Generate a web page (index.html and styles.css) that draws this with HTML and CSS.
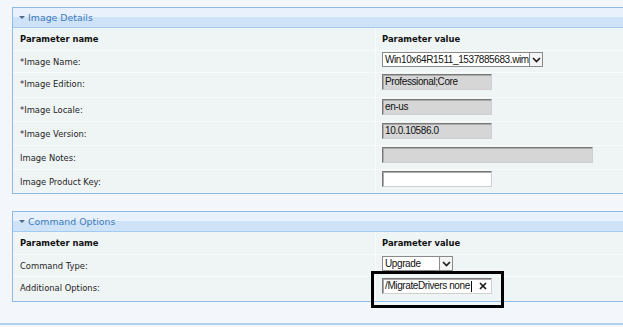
FILE: index.html
```html
<!DOCTYPE html>
<html>
<head>
<meta charset="utf-8">
<link rel="stylesheet" href="styles.css">
</head>
<body>
<div class="page">
  <section class="panel">
    <div class="panel-head"><span class="tri"></span><span class="title">Image Details</span></div>
    <div class="grid">
      <div class="row head">
        <div class="name">Parameter name</div>
        <div class="value">Parameter value</div>
      </div>
      <div class="row first">
        <div class="name">*Image Name:</div>
        <div class="value">
          <div class="select wide"><span class="sel-text">Win10x64R1511_1537885683.wim</span><span class="sel-btn"><svg width="9" height="6" viewBox="0 0 9 6"><path d="M1 1 L4.5 4.5 L8 1" fill="none" stroke="#1a1a1a" stroke-width="1.6"/></svg></span></div>
        </div>
      </div>
      <div class="row tall">
        <div class="name">*Image Edition:</div>
        <div class="value"><div class="input ro">Professional;Core</div></div>
      </div>
      <div class="row">
        <div class="name">*Image Locale:</div>
        <div class="value"><div class="input ro">en-us</div></div>
      </div>
      <div class="row">
        <div class="name">*Image Version:</div>
        <div class="value"><div class="input ro">10.0.10586.0</div></div>
      </div>
      <div class="row">
        <div class="name">Image Notes:</div>
        <div class="value"><div class="input ro notes"></div></div>
      </div>
      <div class="row">
        <div class="name">Image Product Key:</div>
        <div class="value"><div class="input"></div></div>
      </div>
    </div>
  </section>

  <section class="panel second">
    <div class="panel-head"><span class="tri"></span><span class="title">Command Options</span></div>
    <div class="grid">
      <div class="row head">
        <div class="name">Parameter name</div>
        <div class="value">Parameter value</div>
      </div>
      <div class="row short">
        <div class="name">Command Type:</div>
        <div class="value">
          <div class="select small"><span class="sel-text">Upgrade</span><span class="sel-btn"><svg width="9" height="6" viewBox="0 0 9 6"><path d="M1 1 L4.5 4.5 L8 1" fill="none" stroke="#1a1a1a" stroke-width="1.6"/></svg></span></div>
        </div>
      </div>
      <div class="row last">
        <div class="name">Additional Options:</div>
        <div class="value">
          <div class="input opts"><span class="opt-text">/MigrateDrivers none</span><span class="caret"></span><svg class="clear" width="8" height="8" viewBox="0 0 8 8"><path d="M1 1 L7 7 M7 1 L1 7" stroke="#1a1a1a" stroke-width="1.7"/></svg></div>
          <div class="highlight"></div>
        </div>
      </div>
    </div>
  </section>

  <div class="next-panel"></div>
</div>
</body>
</html>
```

FILE: styles.css
```css
html, body {
  margin: 0;
  padding: 0;
  overflow: hidden;
  background: #f3f7fc;
}

.page {
  width: 623px;
  height: 327px;
  padding: 7px 0 0 12px;
  box-sizing: border-box;
  font-family: "DejaVu Sans", Verdana, sans-serif;
  font-size: 8.4px;
  color: #1e1e1e;
  overflow: hidden;
}

.panel {
  width: 700px;
  border: 1px solid #8dbbe6;
  border-right: none;
  background: #eff4f4;
}

.panel.second {
  margin-top: 17px;
}

.panel-head {
  height: 19px;
  display: flex;
  align-items: center;
  background: linear-gradient(to bottom, #e9f2fc 0, #e9f2fc 45%, #cfe3f8 50%, #cfe3f8 100%);
  border-bottom: 1px solid #a3caef;
}

.tri {
  width: 0;
  height: 0;
  margin-left: 6px;
  border-left: 3px solid transparent;
  border-right: 3px solid transparent;
  border-top: 3px solid #4d6b8a;
}

.title {
  margin-left: 3px;
  font-size: 9.4px;
  color: #3d7bb9;
}

.grid {
  display: flex;
  flex-direction: column;
}

.row {
  display: grid;
  grid-template-columns: 362px 1fr;
  height: 24px;
  border-top: 1px solid #f8fbfb;
  box-sizing: border-box;
}

.row.head {
  height: 22px;
  border-top: none;
  font-weight: bold;
  color: #111;
}

.row.first {
  height: 22px;
}

.row.tall {
  height: 25px;
}

.row.short {
  height: 22px;
}

.row.last {
  height: 25px;
}

.name {
  display: flex;
  align-items: center;
  padding-left: 7px;
}

.row.last .name,
.row.tall .name {
  padding-bottom: 2px;
}

.value {
  position: relative;
  border-left: 1px solid #f8fbfb;
  padding-left: 6px;
  padding-top: 1px;
}

.row.head .value {
  display: flex;
  align-items: center;
  padding-top: 0;
}

.input {
  width: 110px;
  height: 16px;
  box-sizing: border-box;
  background: #ffffff;
  border: 1px solid;
  border-color: #7a7a7a #cfcfcf #cfcfcf #7a7a7a;
  box-shadow: inset 1px 1px 0 #a9a9a9;
  font-family: "Liberation Sans", Arial, sans-serif;
  font-size: 10px;
  letter-spacing: -0.4px;
  line-height: 14px;
  padding-left: 2px;
  color: #111;
  white-space: nowrap;
}

.input.ro {
  background: #d6d6d6;
}

.input.notes {
  width: 211px;
}

.input.opts {
  display: flex;
  align-items: center;
  position: relative;
}

.caret {
  width: 1px;
  height: 11px;
  background: #111;
  margin-left: 1px;
}

.clear {
  position: absolute;
  right: 4px;
  top: 3px;
}

.select {
  height: 15px;
  box-sizing: border-box;
  display: flex;
  align-items: stretch;
  background: #fff;
  border: 1px solid #8a8a8a;
  font-family: "Liberation Sans", Arial, sans-serif;
  font-size: 10px;
  letter-spacing: -0.4px;
  color: #111;
}

.select.wide {
  width: 161px;
}

.select.small {
  width: 71px;
}

.sel-text {
  flex: 1;
  padding-left: 2px;
  line-height: 13px;
  white-space: nowrap;
  overflow: hidden;
}

.sel-btn {
  width: 13px;
  box-sizing: border-box;
  border-left: 1px solid #8a8a8a;
  background: #f4f4f4;
  display: flex;
  align-items: center;
  justify-content: center;
}

.highlight {
  position: absolute;
  left: -5px;
  top: -6px;
  width: 133px;
  height: 37px;
  box-sizing: border-box;
  border: 3px solid #000;
  pointer-events: none;
}

.next-panel {
  margin-top: 21px;
  margin-left: -12px;
  width: 640px;
  height: 2px;
  background: #b3d0ee;
}
```
